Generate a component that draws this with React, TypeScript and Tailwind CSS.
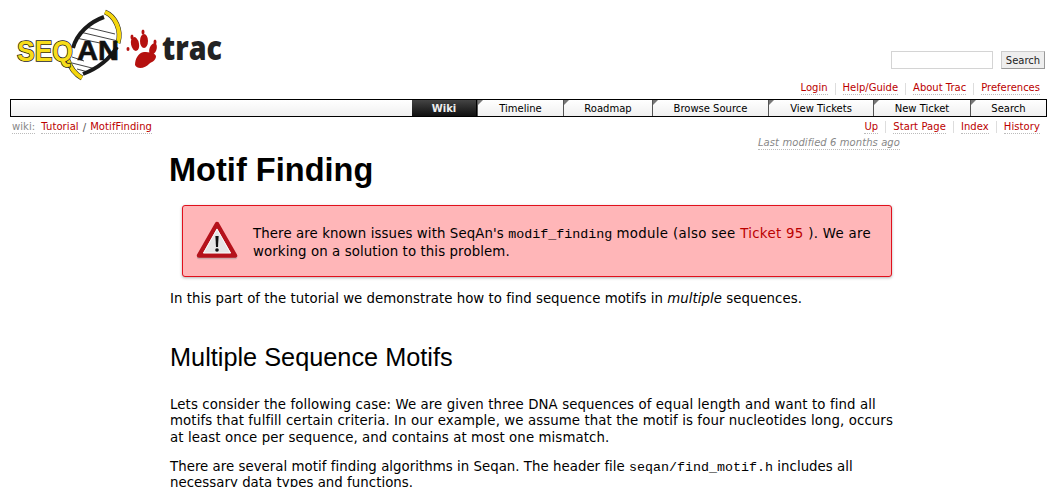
const navItems = [
  { label: 'Timeline', width: 'w-[86px]' },
  { label: 'Roadmap', width: 'w-[89px]' },
  { label: 'Browse Source', width: 'w-[116px]' },
  { label: 'View Tickets', width: 'w-[105px]' },
  { label: 'New Ticket', width: 'w-[97px]' },
  { label: 'Search', width: 'w-[76px]' },
]

function Logo() {
  return (
    <svg width="214" height="78" viewBox="0 0 214 78" className="block">
      {/* helix */}
      <path d="M93 14 C78 20 66 32 62 44 L62 60 L72 72 C88 66 102 54 108 44 L108 28 Z" fill="#fff" />
      <path d="M76 24 L105 31 M70 29 L108 38 M66 35 L90 40 M62 54 L74 58 M62 60 L86 66 M67 66 L78 69" stroke="#444" strokeWidth="1" />
      <path d="M94 14 C80 19 67 30 63 45" fill="none" stroke="#1a1a1a" strokeWidth="4" />
      <path d="M73 71 C86 66 99 57 107 44" fill="none" stroke="#1a1a1a" strokeWidth="4" />
      <path d="M95 9 C105 13 112 27 108 40" fill="none" stroke="#222" strokeWidth="5" />
      <path d="M95 9 C105 13 112 27 108 40" fill="none" stroke="#f5d60e" strokeWidth="4" />
      <path d="M58 57 C60 64 65 71 72 75" fill="none" stroke="#222" strokeWidth="5" />
      <path d="M58 57 C60 64 65 71 72 75" fill="none" stroke="#f5d60e" strokeWidth="4" />
      {/* wordmark */}
      <text x="7" y="58" fontFamily="'Liberation Sans', sans-serif" fontWeight="700" fontSize="30" fill="#f7dc1a" stroke="#1a1a1a" strokeWidth="1.6" paintOrder="stroke" textLength="56" lengthAdjust="spacingAndGlyphs">SEQ</text>
      <text x="67" y="57" fontFamily="'Liberation Sans', sans-serif" fontWeight="700" fontSize="27" fill="#111" stroke="#111" strokeWidth="0.6" textLength="42" lengthAdjust="spacingAndGlyphs">AN</text>
      {/* paw */}
      <g fill="#b5110f">
        <ellipse cx="118" cy="46" rx="1.5" ry="2" />
        <ellipse cx="122" cy="34" rx="1.5" ry="2.5" />
        <ellipse cx="133" cy="29" rx="1.5" ry="2.5" />
        <ellipse cx="145" cy="39" rx="1.5" ry="2.5" />
        <ellipse cx="125" cy="41" rx="4" ry="7" transform="rotate(-12 125 41)" />
        <ellipse cx="134" cy="38" rx="4" ry="7" />
        <ellipse cx="143" cy="46" rx="3.5" ry="6" transform="rotate(20 143 46)" />
        <path d="M125 62 C125 56 128 50 134 49 C139 49 145 50 146 53 C146 58 141 59 139 61 C136 65 127 67 125 62 Z" />
      </g>
      <text x="152" y="57" fontFamily="'Open Sans', 'Liberation Sans', sans-serif" fontWeight="800" fontSize="33" fill="#222" textLength="60" lengthAdjust="spacingAndGlyphs">trac</text>
    </svg>
  )
}

function WarningIcon() {
  return (
    <svg width="42" height="42" viewBox="0 0 42 42" className="block shrink-0">
      <path d="M21 6 L39 37 H3 Z" fill="#999" stroke="#999" strokeWidth="4.5" strokeLinejoin="round" opacity="0.5" />
      <path d="M21 4 L39 35.5 H3 Z" fill="#ececec" stroke="#b5121b" strokeWidth="4.5" strokeLinejoin="round" />
      <path d="M21 9 L34.5 33 H7.5 Z" fill="#e6e6e6" stroke="#fff" strokeWidth="0.8" strokeLinejoin="round" />
      <path d="M19.4 16 H22.6 L22 27 H20 Z" fill="#111" />
      <circle cx="21" cy="30" r="1.8" fill="#111" />
    </svg>
  )
}

function SubLink({ children, first }: { children: string; first?: boolean }) {
  return (
    <span className={first ? 'text-[#b00] border-b border-dotted border-[#bbb] leading-[12px]' : 'text-[#b00] border-b border-dotted border-[#bbb] leading-[12px] ml-[7px]'}>
      {children}
    </span>
  )
}

function Sep() {
  return <span className="w-px h-[12px] bg-[#ddd] ml-[7px]" />
}

export default function App() {
  return (
    <div className="w-[1057px] h-[487px] overflow-hidden bg-white text-black font-['DejaVu_Sans',Verdana,sans-serif]">
      <header className="h-[99px] relative">
        <div className="flex justify-between pl-[10px] pr-[12px]">
          <div className="pt-[3px]">
            <Logo />
          </div>
          <div className="flex flex-col items-end">
            <div className="flex items-center mt-[51px]">
              <div className="w-[102px] h-[18px] border border-[#d4d4d4] bg-white" />
              <div className="ml-[8px] w-[44px] h-[18px] bg-[#eee] border border-[#ccc] border-b-[#999] border-r-[#999] flex items-center justify-center text-[10px] text-[#222]">
                Search
              </div>
            </div>
            <div className="flex items-center text-[10px] mt-[13px] mr-[5px]">
              <SubLink first>Login</SubLink>
              <Sep />
              <SubLink>Help/Guide</SubLink>
              <Sep />
              <SubLink>About Trac</SubLink>
              <Sep />
              <SubLink>Preferences</SubLink>
            </div>
          </div>
        </div>
      </header>

      <nav className="ml-[10px] w-[1037px] h-[18px] border border-black flex justify-end bg-gradient-to-b from-white to-[#f0f0f0] text-[10px] leading-[17px]">
        <div className="w-[65px] text-center font-bold text-[#eee] bg-gradient-to-b from-[#444] to-[#111] border-r border-black">Wiki</div>
        {navItems.map((item) => (
          <div key={item.label} className={`${item.width} relative text-center text-black border-l border-[#555]`}>
            <span className="absolute top-0 left-0 w-0 h-0 border-t-[5px] border-r-[5px] border-t-[#777] border-r-transparent" />
            {item.label}
          </div>
        ))}
      </nav>

      <div className="flex justify-between text-[10px] tracking-[0.08px] pl-[12px] pr-[17px] mt-[3px] h-[14px]">
        <div className="flex items-center">
          <span className="text-[#888] border-b border-dotted border-[#bbb] leading-[12px]">wiki:</span>
          <span className="text-[#b00] border-b border-dotted border-[#bbb] leading-[12px] ml-[6px]">Tutorial</span>
          <span className="text-[#555] mx-[4px]">/</span>
          <span className="text-[#b00] border-b border-dotted border-[#bbb] leading-[12px]">MotifFinding</span>
        </div>
        <div className="flex items-center">
          <SubLink first>Up</SubLink>
          <Sep />
          <SubLink>Start Page</SubLink>
          <Sep />
          <SubLink>Index</SubLink>
          <Sep />
          <SubLink>History</SubLink>
        </div>
      </div>

      <div className="flex justify-end pr-[157px] text-[10px] italic tracking-[0.08px] leading-[12px] text-[#888] mt-[3px]">
        <span className="border-b border-dotted border-[#bbb]">Last modified 6 months ago</span>
      </div>

      <main className="ml-[170px] w-[730px] text-[13.33px] tracking-[0.03px] leading-[16.5px]">
        <h1 className="-ml-px pt-px font-['Liberation_Sans',Arial,sans-serif] font-bold text-[32.5px] leading-[38px]">Motif Finding</h1>

        <div className="ml-[12px] w-[710px] h-[72px] mt-[16px] bg-[#ffb6b8] border border-[#e0101c] rounded-[3px] shadow-[0_1px_3px_rgba(0,0,0,0.3)] flex items-center pl-[13px]">
          <WarningIcon />
          <p className="ml-[15px] w-[630px] pt-[2px] tracking-[0.1px] leading-[17px]">
            There are known issues with SeqAn's <code className="font-['Liberation_Mono',monospace] text-[13.33px] tracking-normal">modif_finding</code> <span className="tracking-[0.32px]">module (also see <span className="text-[#b00]">Ticket 95</span> ). We are</span> working on a solution to this problem.
          </p>
        </div>

        <p className="mt-[14px]">
          In this part of the tutorial we demonstrate how to find sequence motifs in <em>multiple</em> sequences.
        </p>

        <h2 className="font-['Liberation_Sans',Arial,sans-serif] text-[25.3px] tracking-normal leading-[30px] mt-[34px]">Multiple Sequence Motifs</h2>

        <p className="mt-[25px] tracking-[0.09px]">
          Lets consider the following case: We are given three DNA sequences of equal length and want to find all motifs that fulfill certain criteria. In our example, we assume that the motif is four nucleotides long, occurs at least once per sequence, and contains at most one mismatch.
        </p>
        <p className="mt-[13px] leading-[15px]">
          There are several motif finding algorithms in Seqan. The header file <code className="font-['Liberation_Mono',monospace] text-[13.33px] tracking-normal">seqan/find_motif.h</code> includes all necessary data types and functions.
        </p>
      </main>
    </div>
  )
}
